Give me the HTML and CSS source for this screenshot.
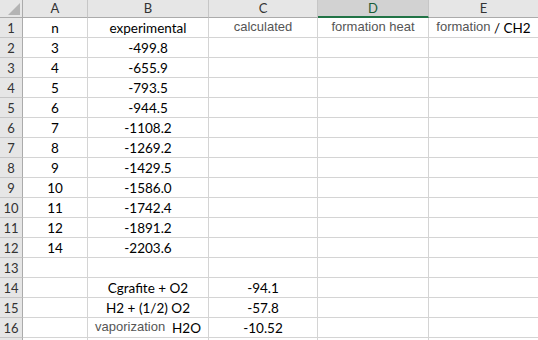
FILE: index.html
```html
<!DOCTYPE HTML>
<html>

<head>
  <meta charset="utf-8">
  <link rel="stylesheet" href="styles.css">
</head>

<body>
  <div class="sheet">
    <div class="corner"><span class="tri"></span></div>
    <div class="colhd">A</div>
    <div class="colhd">B</div>
    <div class="colhd">C</div>
    <div class="colhd sel">D</div>
    <div class="colhd">E</div>

    <div class="rowhd">1</div>
    <div class="cell">n</div>
    <div class="cell">experimental</div>
    <div class="cell"><span class="ar">calculated</span></div>
    <div class="cell"><span class="ar">formation heat</span></div>
    <div class="cell"><span class="ar">formation</span> / CH2</div>

    <div class="rowhd">2</div>
    <div class="cell">3</div>
    <div class="cell">-499.8</div>
    <div class="cell"></div>
    <div class="cell"></div>
    <div class="cell"></div>

    <div class="rowhd">3</div>
    <div class="cell">4</div>
    <div class="cell">-655.9</div>
    <div class="cell"></div>
    <div class="cell"></div>
    <div class="cell"></div>

    <div class="rowhd">4</div>
    <div class="cell">5</div>
    <div class="cell">-793.5</div>
    <div class="cell"></div>
    <div class="cell"></div>
    <div class="cell"></div>

    <div class="rowhd">5</div>
    <div class="cell">6</div>
    <div class="cell">-944.5</div>
    <div class="cell"></div>
    <div class="cell"></div>
    <div class="cell"></div>

    <div class="rowhd">6</div>
    <div class="cell">7</div>
    <div class="cell">-1108.2</div>
    <div class="cell"></div>
    <div class="cell"></div>
    <div class="cell"></div>

    <div class="rowhd">7</div>
    <div class="cell">8</div>
    <div class="cell">-1269.2</div>
    <div class="cell"></div>
    <div class="cell"></div>
    <div class="cell"></div>

    <div class="rowhd">8</div>
    <div class="cell">9</div>
    <div class="cell">-1429.5</div>
    <div class="cell"></div>
    <div class="cell"></div>
    <div class="cell"></div>

    <div class="rowhd">9</div>
    <div class="cell">10</div>
    <div class="cell">-1586.0</div>
    <div class="cell"></div>
    <div class="cell"></div>
    <div class="cell"></div>

    <div class="rowhd">10</div>
    <div class="cell">11</div>
    <div class="cell">-1742.4</div>
    <div class="cell"></div>
    <div class="cell"></div>
    <div class="cell"></div>

    <div class="rowhd">11</div>
    <div class="cell">12</div>
    <div class="cell">-1891.2</div>
    <div class="cell"></div>
    <div class="cell"></div>
    <div class="cell"></div>

    <div class="rowhd">12</div>
    <div class="cell">14</div>
    <div class="cell">-2203.6</div>
    <div class="cell"></div>
    <div class="cell"></div>
    <div class="cell"></div>

    <div class="rowhd">13</div>
    <div class="cell"></div>
    <div class="cell"></div>
    <div class="cell"></div>
    <div class="cell"></div>
    <div class="cell"></div>

    <div class="rowhd">14</div>
    <div class="cell"></div>
    <div class="cell">Cgrafite + O2</div>
    <div class="cell">-94.1</div>
    <div class="cell"></div>
    <div class="cell"></div>

    <div class="rowhd">15</div>
    <div class="cell"></div>
    <div class="cell">H2 + (1/2) O2</div>
    <div class="cell">-57.8</div>
    <div class="cell"></div>
    <div class="cell"></div>

    <div class="rowhd">16</div>
    <div class="cell"></div>
    <div class="cell"><span class="ar">vaporization</span>&nbsp; H2O</div>
    <div class="cell">-10.52</div>
    <div class="cell"></div>
    <div class="cell"></div>

    <div class="rowhd"></div>
    <div class="cell"></div>
    <div class="cell"></div>
    <div class="cell"></div>
    <div class="cell"></div>
    <div class="cell"></div>
  </div>
</body>

</html>
```

FILE: styles.css
```css
body {
    margin: 0;
    overflow: hidden;
    background: #fff;
}
.sheet {
    display: grid;
    grid-template-columns: 23px 65px 121px 109px 111px 110px;
    grid-template-rows: 18px;
    grid-auto-rows: 20px;
    font-family: Lato, "Noto Sans", sans-serif;
    font-size: 13.5px;
    color: #000;
}
.sheet > div {
    box-sizing: border-box;
    border-right: 1px solid #d4d4d4;
    border-bottom: 1px solid #d4d4d4;
    white-space: nowrap;
    overflow: hidden;
}
.corner {
    position: relative;
    background: #e6e6e6;
    border-right-color: #ababab !important;
    border-bottom-color: #ababab !important;
}
.tri {
    position: absolute;
    right: 2px;
    bottom: 2px;
    width: 0;
    height: 0;
    border-left: 12px solid transparent;
    border-bottom: 12px solid #b4b4b4;
}
.colhd {
    background: #e6e6e6;
    border-right-color: #c6c6c6 !important;
    border-bottom-color: #ababab !important;
    text-align: center;
    font-size: 13px;
    line-height: 17px;
    color: #333;
}
.colhd.sel {
    background: #d2d2d2;
    border-bottom: 2px solid #217346 !important;
    color: #185c37;
    line-height: 16px;
}
.rowhd {
    background: #e6e6e6;
    border-right-color: #ababab !important;
    border-bottom-color: #c6c6c6 !important;
    text-align: center;
    font-size: 13px;
    line-height: 20px;
    color: #333;
}
.cell {
    text-align: center;
    line-height: 20px;
}
.ar {
    font-family: "Liberation Sans", Arial, sans-serif;
    font-size: 13px;
    color: #555;
    position: relative;
    top: -2px;
}
```
